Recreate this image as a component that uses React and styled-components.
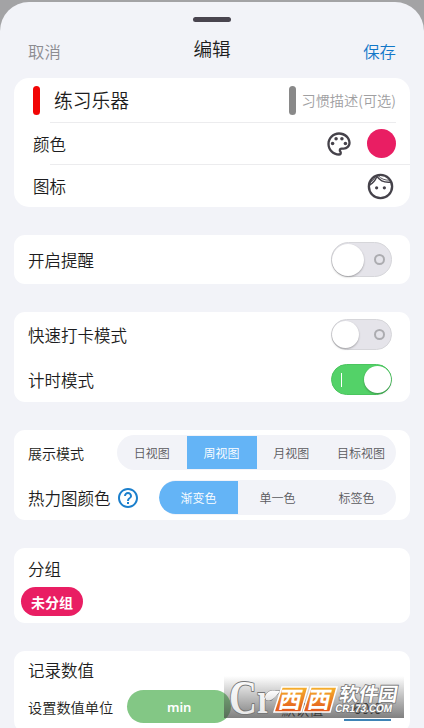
import React, { useState } from 'react';
import styled, { createGlobalStyle } from 'styled-components';
import { MdOutlinePalette, MdHelpOutline } from 'react-icons/md';

const GlobalStyle = createGlobalStyle`
  * {
    box-sizing: border-box;
  }

  body {
    margin: 0;
    background: #a3a3a5;
    font-family: 'Noto Sans CJK SC', 'Noto Sans', sans-serif;
    font-weight: 350;
    color: #1d1d20;
    overflow: hidden;
  }

  button {
    padding: 0;
    border: 0;
    background: none;
    font: inherit;
    cursor: pointer;
  }
`;

const Page = styled.div`
  height: 728px;
  padding-top: 2px;
  overflow: hidden;
`;

const Sheet = styled.main`
  height: 740px;
  padding: 15px 14px 0;
  border-radius: 29px 29px 0 0;
  background: #f2f3f8;
`;

const Handle = styled.div`
  width: 38px;
  height: 5px;
  margin: 0 auto;
  border-radius: 3px;
  background: #49454f;
`;

const Header = styled.header`
  display: flex;
  justify-content: space-between;
  height: 56px;
  padding: 0 14px;
`;

const HeaderButton = styled.button`
  height: 58px;
  line-height: 58px;
  font-size: 16.4px;
  color: ${props => props.$color};
`;

const Title = styled.h1`
  margin: 0;
  font-size: 18.6px;
  font-weight: 350;
  line-height: 52px;
`;

const Card = styled.section`
  height: ${props => props.$height}px;
  margin-bottom: ${props => props.$gap || 28}px;
  border-radius: ${props => props.$radius || 11}px;
  background: #fff;
`;

const Row = styled.div`
  display: flex;
  align-items: center;
  height: ${props => props.$height}px;
  padding: 0 ${props => props.$right || 14}px 0 ${props => props.$left || 14}px;
`;

const Divider = styled.div`
  height: 1px;
  margin: 0 ${props => props.$right || 0}px 0 36px;
  background: #ececee;
`;

const Label = styled.div`
  flex: none;
  font-size: ${props => props.$size || 16.5}px;
  line-height: 24px;
`;

const GroupLabel = styled(Label)`
  padding-top: 2px;
`;

const Cursor = styled.div`
  width: 7px;
  height: 29px;
  border-radius: 4px;
  background: ${props => props.$color};
`;

const Name = styled.div`
  flex: 1;
  margin-left: 14px;
  font-size: 18.8px;
  line-height: 28px;
`;

const Placeholder = styled.div`
  margin-left: 5px;
  font-size: 14.2px;
  color: #a0a0a2;
  white-space: nowrap;
`;

const Actions = styled.div`
  display: flex;
  align-items: center;
  gap: 14px;
  margin-left: auto;
  color: #45424a;
`;

const ColorDot = styled.div`
  width: 29px;
  height: 29px;
  border-radius: 50%;
  background: #e91e63;
`;

const Track = styled.button`
  display: flex;
  align-items: center;
  justify-content: space-between;
  flex-direction: ${props => (props.$on ? 'row-reverse' : 'row')};
  width: 61px;
  height: ${props => props.$height}px;
  margin-left: auto;
  border: 1px solid ${props => (props.$on ? '#4bc55f' : '#d6d6da')};
  border-radius: 18px;
  background: ${props => (props.$on ? '#53d268' : '#e5e4ea')};
`;

const Knob = styled.span`
  width: ${props => props.$size}px;
  height: ${props => props.$size}px;
  border-radius: 50%;
  background: #fff;
  box-shadow: 0 1px 2px rgba(0, 0, 0, 0.3);
`;

const OffMark = styled.span`
  width: 11px;
  height: 11px;
  margin-right: 6px;
  border: 2px solid #acacb0;
  border-radius: 50%;
`;

const OnMark = styled.span`
  width: 1px;
  height: 14px;
  margin-left: 9px;
  background: #fff;
`;

const Segments = styled.div`
  display: grid;
  grid-template-columns: repeat(${props => props.$count}, 1fr);
  width: ${props => props.$width}px;
  height: 35px;
  margin-left: auto;
  padding: 1px 0;
  border-radius: 18px;
  background: #f2f3f8;
  overflow: hidden;
`;

const Segment = styled.button`
  border-radius: ${props => (props.$first ? '17px 0 0 17px' : 0)};
  background: ${props => (props.$active ? '#64b4f6' : 'transparent')};
  color: ${props => (props.$active ? '#fff' : '#5a5a5e')};
  font-size: 12px;
`;

const Help = styled(MdHelpOutline)`
  margin-left: 5px;
  color: #1b7fcc;
`;

const Tag = styled.div`
  display: flex;
  align-items: center;
  justify-content: center;
  width: 62px;
  height: 29px;
  margin-left: 7px;
  border-radius: 15px;
  background: #e91e63;
  color: #fff;
  font-size: 14px;
  font-weight: 700;
`;

const Unit = styled.button`
  width: 104px;
  height: 33px;
  margin-left: 14px;
  border-radius: 17px;
  background: #83c785;
  color: #fff;
  font-family: 'Noto Sans', sans-serif;
  font-size: 13px;
  font-weight: 600;
`;

const DefaultValue = styled.div`
  width: 47px;
  height: 28px;
  margin: 0 5px 0 auto;
  padding-top: 4px;
  border-bottom: 2px solid #3f83b5;
  font-size: 15px;
  line-height: 22px;
  text-align: center;
`;

const DefaultLabel = styled.div`
  margin: 5px 0 0 50px;
  font-size: 14px;
`;

const Watermark = styled.svg`
  position: absolute;
  left: 224px;
  top: 676px;
  width: 180px;
  height: 42px;
  overflow: visible;
`;

function Toggle({ defaultOn, height = 31, knob = 27 }) {
  const [on, setOn] = useState(Boolean(defaultOn));

  return (
    <Track type="button" $on={on} $height={height} onClick={() => setOn(!on)}>
      <Knob $size={knob} />
      {on ? <OnMark /> : <OffMark />}
    </Track>
  );
}

function SegmentGroup({ items, initial, width }) {
  const [selected, setSelected] = useState(initial);

  return (
    <Segments $count={items.length} $width={width}>
      {items.map((item, index) => (
        <Segment
          key={item}
          type="button"
          $first={index === 0}
          $active={item === selected}
          onClick={() => setSelected(item)}
        >
          {item}
        </Segment>
      ))}
    </Segments>
  );
}

function FaceIcon() {
  return (
    <svg width="31" height="31" viewBox="0 0 24 24" fill="none" stroke="currentColor" strokeWidth="1.8">
      <circle cx="12" cy="12" r="9" />
      <path d="M3.4 10.9C5.8 9.6 7.9 7.4 9.2 4.2C11.3 7.2 15 9.3 20.2 8.6" strokeWidth="1.2" />
      <path d="M4 8.8C5.8 7.8 7.3 6.3 8 4M10.2 3.6C12.3 6 15.3 7.3 19.2 7.1" strokeWidth="0.7" />
      <circle cx="9" cy="13" r="1.25" fill="currentColor" stroke="none" />
      <circle cx="15" cy="13" r="1.25" fill="currentColor" stroke="none" />
    </svg>
  );
}

function SiteMark() {
  return (
    <Watermark viewBox="0 0 180 42">
      <defs>
        <linearGradient id="shade" x1="0" y1="0" x2="0" y2="1">
          <stop offset="0" stopColor="#444" stopOpacity="0" />
          <stop offset="1" stopColor="#444" stopOpacity="0.68" />
        </linearGradient>
        <linearGradient id="orange" x1="0" y1="0" x2="0" y2="1">
          <stop offset="0" stopColor="#f6b12c" />
          <stop offset="1" stopColor="#e2541c" />
        </linearGradient>
        <linearGradient id="silver" x1="0" y1="0" x2="0" y2="1">
          <stop offset="0" stopColor="#fff" />
          <stop offset="1" stopColor="#e4e4e4" />
        </linearGradient>
      </defs>
      <rect width="180" height="42" fill="url(#shade)" />
      <g fill="url(#silver)" stroke="#777" strokeWidth="2" paintOrder="stroke" strokeLinejoin="round">
        <text x="5" y="38" fontFamily="Liberation Serif, serif" fontSize="49" fontWeight="700" textLength="28" lengthAdjust="spacingAndGlyphs">C</text>
        <text x="33" y="37" fontFamily="Liberation Serif, serif" fontSize="44" fontWeight="700" textLength="15" lengthAdjust="spacingAndGlyphs">r</text>
        <path d="M41 21C43 14 48 14 56 15C52 21 47 26 42 24Z" strokeWidth="1" />
      </g>
      <g stroke="#fff" strokeWidth="1.5" fill="url(#orange)">
        <path d="M58 11H84L77 36H50Z" />
        <path d="M87 11H113L106 36H79Z" />
      </g>
      <g fill="#fff" fontSize="23" fontWeight="700" transform="skewX(-12)">
        <text x="60" y="32" textLength="23" lengthAdjust="spacingAndGlyphs">西</text>
        <text x="89" y="32" textLength="23" lengthAdjust="spacingAndGlyphs">西</text>
      </g>
      <g fill="#fff" stroke="#777" strokeWidth="1.6" paintOrder="stroke" transform="skewX(-10)">
        <text x="119" y="25" fontSize="19" fontWeight="700" textLength="58" lengthAdjust="spacingAndGlyphs">软件园</text>
        <text x="117" y="36" fontFamily="Liberation Sans, sans-serif" fontSize="11" fontWeight="700" textLength="57" lengthAdjust="spacingAndGlyphs">CR173.COM</text>
      </g>
    </Watermark>
  );
}

function App() {
  return (
    <>
      <GlobalStyle />
      <Page>
        <Sheet>
          <Handle />
          <Header>
            <HeaderButton type="button" $color="#8c8c91">取消</HeaderButton>
            <Title>编辑</Title>
            <HeaderButton type="button" $color="#1277c8">保存</HeaderButton>
          </Header>

          <Card $height={129} $radius={15}>
            <Row $height={44} $left={19}>
              <Cursor $color="#f20505" />
              <Name>练习乐器</Name>
              <Cursor $color="#898989" />
              <Placeholder>习惯描述(可选)</Placeholder>
            </Row>
            <Divider $right={14} />
            <Row $height={41} $left={19}>
              <Label>颜色</Label>
              <Actions>
                <MdOutlinePalette size={28} />
                <ColorDot />
              </Actions>
            </Row>
            <Divider />
            <Row $height={42} $left={19}>
              <Label>图标</Label>
              <Actions>
                <FaceIcon />
              </Actions>
            </Row>
          </Card>

          <Card $height={49}>
            <Row $height={49} $right={18}>
              <Label>开启提醒</Label>
              <Toggle height={35} knob={32} />
            </Row>
          </Card>

          <Card $height={90}>
            <Row $height={45} $right={18}>
              <Label>快速打卡模式</Label>
              <Toggle />
            </Row>
            <Row $height={45} $right={18}>
              <Label>计时模式</Label>
              <Toggle defaultOn />
            </Row>
          </Card>

          <Card $height={90}>
            <Row $height={45}>
              <Label $size={14}>展示模式</Label>
              <SegmentGroup
                items={['日视图', '周视图', '月视图', '目标视图']}
                initial="周视图"
                width={279}
              />
            </Row>
            <Row $height={45}>
              <Label>热力图颜色</Label>
              <Help size={24} />
              <SegmentGroup
                items={['渐变色', '单一色', '标签色']}
                initial="渐变色"
                width={237}
              />
            </Row>
          </Card>

          <Card $height={75}>
            <Row $height={39}>
              <GroupLabel>分组</GroupLabel>
            </Row>
            <Tag>未分组</Tag>
          </Card>

          <Card $height={81}>
            <Row $height={37}>
              <Label>记录数值</Label>
            </Row>
            <Row $height={37}>
              <Label $size={14.2}>设置数值单位</Label>
              <Unit type="button">min</Unit>
              <DefaultLabel>默认值</DefaultLabel>
              <DefaultValue>60.0</DefaultValue>
            </Row>
          </Card>
        </Sheet>
        <SiteMark />
      </Page>
    </>
  );
}

export default App;
